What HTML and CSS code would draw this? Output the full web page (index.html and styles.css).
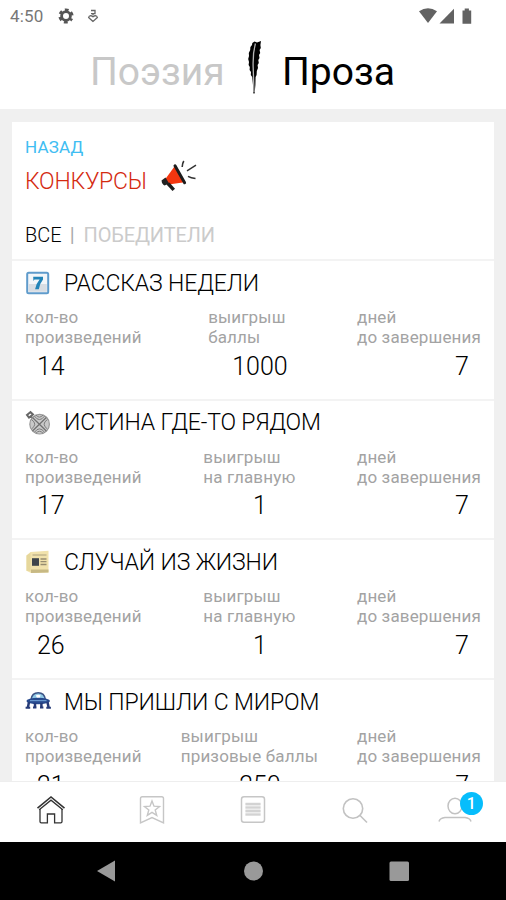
FILE: index.html
```html
<!DOCTYPE html>
<html lang="ru">
<head>
    <meta charset="UTF-8">
    <meta name="viewport" content="width=device-width, initial-scale=1.0">
    <title>Конкурсы</title>
    <link rel="stylesheet" href="styles.css">
</head>
<body>
    <div class="screen">

        <!-- Status Bar -->
        <div class="status-bar">
            <span class="clock">4:50</span>
            <svg class="gear" width="16" height="16" viewBox="0 0 16 16">
                <circle cx="8" cy="8" r="4.4" fill="none" stroke="#555" stroke-width="2.8"/>
                <circle cx="8" cy="8" r="6" fill="none" stroke="#555" stroke-width="3.2" stroke-dasharray="3.4 2.883" stroke-dashoffset="1.7" transform="rotate(30 8 8)"/>
            </svg>
            <svg class="debug" width="12" height="14" viewBox="0 0 12 14" fill="none" stroke="#666" stroke-width="1.3">
                <path d="M4 1.5h4v3.2h-4M6 4v2.5"/>
                <path d="M6 12.5L1.6 8.6Q2 6.4 4 6.6L6 7.8L8 6.6Q10 6.4 10.4 8.6Z"/>
            </svg>
            <svg class="signals" width="54" height="16" viewBox="0 0 54 16" fill="#626262">
                <path d="M0 3.2Q9 -2.6 18 3.2L9 15Z"/>
                <path d="M35 0.8V15.4H20.5Z"/>
                <path d="M43.5 2.5h2.2V0.5h4.2v2h2.3V15.7h-8.7Z"/>
            </svg>
        </div>

        <!-- Header -->
        <div class="header">
            <span class="title muted">Поэзия</span>
            <svg class="quill" width="16" height="54" viewBox="0 0 16 54">
                <path d="M7.5 0.5L10 1.5L14 0L13.4 4L13.8 7L12.6 9L13.2 12L12 14L12.5 17L11.3 19L11.8 22L10.6 24L11 27L9.8 30L9.6 34L8.6 36L8.4 44L7.6 52.5L6.4 52.5L6 44L5.2 36L3.8 34L4 31L2.6 29L2.8 26L1.6 24L2 21L1.2 18L2 15L1.8 12L3.2 9L3.4 6L5 4L5.3 2Z" fill="#000"/>
                <path d="M8.4 2.5Q5.6 13 6.2 27L7 51" fill="none" stroke="#b5b5b5" stroke-width="1.3"/>
            </svg>
            <span class="title">Проза</span>
        </div>

        <!-- Contest List -->
        <div class="content">
            <div class="card">
                <div class="card-head">
                    <div class="back">НАЗАД</div>
                    <div class="heading">
                        <span>КОНКУРСЫ</span>
                        <svg class="horn" width="36" height="34" viewBox="0 0 36 34">
                            <path d="M13.5 6.5L4 19.5L7.5 24.5L23.5 22.2Z" fill="#f4360f"/>
                            <path d="M0.5 20.5L4.5 17.6L8.2 23.4L3.5 25.4Q1 24.5 0.5 20.5Z" fill="#222"/>
                            <path d="M5.5 24.5L8.5 22.5L14 28.8L11.5 31Z" fill="#1d1d1d"/>
                            <path d="M14 5.8L23.6 22.8" stroke="#1d1d1d" stroke-width="3" stroke-linecap="round"/>
                            <path d="M21.2 7Q21.2 3.5 22.8 1" fill="none" stroke="#333" stroke-width="1.6"/>
                            <path d="M26 10.8L35 5.2M27 16.3Q30 18 34.5 18.4" fill="none" stroke="#333" stroke-width="1.5"/>
                        </svg>
                    </div>
                    <div class="filters">
                        <span>ВСЕ</span>
                        <span class="bar">|</span>
                        <span class="winners">ПОБЕДИТЕЛИ</span>
                    </div>
                </div>

                <div class="contest">
                    <div class="contest-name">
                        <svg class="icon" width="26" height="26" viewBox="0 0 26 26">
                            <rect x="2.2" y="2.7" width="21" height="20.6" rx="1.5" fill="#f3f6f9" stroke="#5f9bcb" stroke-width="2"/>
                            <path d="M3.6 14h18.2v7.8H3.6Z" fill="#d8dde3"/>
                            <path d="M8.2 6.8h9.8v2.6Q14.6 13.6 13.8 19.2h-3.7Q11 13.5 14.6 9.4H9.5L8.4 11Z" fill="#2384b8"/>
                        </svg>
                        <span>РАССКАЗ НЕДЕЛИ</span>
                    </div>
                    <div class="labels">
                        <span>кол-во<br>произведений</span>
                        <span class="points">выигрыш<br>баллы</span>
                        <span>дней<br>до завершения</span>
                    </div>
                    <div class="values"><span>14</span><span>1000</span><span>7</span></div>
                </div>

                <div class="contest">
                    <div class="contest-name">
                        <svg class="icon" width="26" height="26" viewBox="0 0 26 26" fill="none">
                            <path d="M2 5L5.5 2L8 4.5L4 7.5ZM5.5 6L9 9.5" stroke="#666" stroke-width="2"/>
                            <circle cx="14.6" cy="14.2" r="9.8" fill="#c9c9c9" stroke="#999" stroke-width="1.2"/>
                            <path d="M7.5 7.5L21.3 21M21.3 7.5L7.5 21" stroke="#707070" stroke-width="1.2"/>
                            <path d="M9.5 6.2Q14.4 13 19.5 6.2M9.5 22.2Q14.4 15.5 19.5 22.2M6.5 9.5Q13 14.2 6.5 19M22.4 9.5Q15.8 14.2 22.4 19M11 5.2Q14.4 9 18 5.2M11 23.2Q14.4 19.4 18 23.2" stroke="#7c7c7c" stroke-width="1"/>
                        </svg>
                        <span>ИСТИНА ГДЕ-ТО РЯДОМ</span>
                    </div>
                    <div class="labels">
                        <span>кол-во<br>произведений</span>
                        <span>выигрыш<br>на главную</span>
                        <span>дней<br>до завершения</span>
                    </div>
                    <div class="values"><span>17</span><span>1</span><span>7</span></div>
                </div>

                <div class="contest">
                    <div class="contest-name">
                        <svg class="icon" width="26" height="26" viewBox="0 0 26 26">
                            <path d="M5.5 3L23.5 1.8V23.6L6 24L1.5 21.8V6.5Z" fill="#f1e2ac"/>
                            <path d="M1.5 6.5L5.5 4V22L1.5 21.8Z" fill="#e6d79c"/>
                            <path d="M7.5 6H21.5" stroke="#b8ac86" stroke-width="1.2"/>
                            <rect x="7" y="9.2" width="7" height="7.6" fill="#3f454b"/>
                            <path d="M15.5 10H21.5M15.5 12.7H21.5M15.5 15.5H21.5" stroke="#968c70" stroke-width="1.3"/>
                            <path d="M6 20.4H23.5V23.6L6 24Z" fill="#c7b984"/>
                        </svg>
                        <span>СЛУЧАЙ ИЗ ЖИЗНИ</span>
                    </div>
                    <div class="labels">
                        <span>кол-во<br>произведений</span>
                        <span>выигрыш<br>на главную</span>
                        <span>дней<br>до завершения</span>
                    </div>
                    <div class="values"><span>26</span><span>1</span><span>7</span></div>
                </div>

                <div class="contest">
                    <div class="contest-name">
                        <svg class="icon" width="26" height="26" viewBox="0 0 26 26">
                            <path d="M6 10.5Q7 3.8 13.2 3.8T20.4 10.5Z" fill="#91c9e6" stroke="#3d5486" stroke-width="1.5"/>
                            <path d="M10.8 6.5Q13.2 5 15.6 6.5L14.5 9H12Z" fill="#fff"/>
                            <ellipse cx="13.2" cy="12" rx="11.8" ry="3.3" fill="#274a8e"/>
                            <path d="M4 13L2.8 19M10 14V18.5M16.4 14V18.5M22.5 13L23.7 19" stroke="#263b78" stroke-width="2.5"/>
                            <path d="M5 11.6H21.5" stroke="#6796cd" stroke-width="1.2"/>
                            <path d="M0.6 18.8h4.6M8 18.5h3.4M15 18.5h3.4M21.3 18.8h4.6" stroke="#263b78" stroke-width="2"/>
                        </svg>
                        <span>МЫ ПРИШЛИ С МИРОМ</span>
                    </div>
                    <div class="labels">
                        <span>кол-во<br>произведений</span>
                        <span>выигрыш<br>призовые баллы</span>
                        <span>дней<br>до завершения</span>
                    </div>
                    <div class="values"><span>21</span><span>250</span><span>7</span></div>
                </div>
            </div>
        </div>

        <!-- Tab Bar -->
        <div class="tab-bar">
            <div class="tab">
                <svg width="32" height="32" viewBox="0 0 32 32" fill="none" stroke="#333" stroke-width="1.3">
                    <path d="M2.5 15.2L16 4L29.5 15.2" stroke-width="1.6"/>
                    <path d="M4.2 16.8L16 7.2L27.8 16.8"/>
                    <path d="M5 16V28.5Q5 29.8 6.3 29.8H12.4V21H19.6V29.8H25.7Q27 29.8 27 28.5V16"/>
                </svg>
            </div>
            <div class="tab">
                <svg width="32" height="32" viewBox="0 0 32 32" fill="none" stroke="#c6c6c6" stroke-width="1.4">
                    <path d="M4.5 30V5.5Q4.5 3.7 6.3 3.7H25.7Q27.5 3.7 27.5 5.5V30L16 24.5Z"/>
                    <path d="M16 8L18 13.2L23.5 13.5L19.2 17L20.7 22.3L16 19.3L11.3 22.3L12.8 17L8.5 13.5L14 13.2Z"/>
                </svg>
            </div>
            <div class="tab">
                <svg width="32" height="32" viewBox="0 0 32 32" fill="none" stroke="#c6c6c6" stroke-width="1.5">
                    <rect x="4.5" y="3.7" width="23" height="25.6" rx="2.5"/>
                    <rect x="8.5" y="9.5" width="15" height="13.5" fill="#ececec" stroke="none"/>
                    <path d="M8.5 11H23.5M8.5 14.5H23.5M8.5 18H23.5M8.5 21.5H23.5" stroke-width="1.8" stroke="#d3d3d3"/>
                </svg>
            </div>
            <div class="tab">
                <svg width="32" height="32" viewBox="0 0 32 32" fill="none" stroke="#c2c2c2" stroke-width="1.6">
                    <circle cx="15" cy="15.5" r="9.7"/>
                    <path d="M21.8 22.3L29 29.5"/>
                </svg>
            </div>
            <div class="tab">
                <svg width="36" height="32" viewBox="0 0 36 32" fill="none" stroke="#c2c2c2" stroke-width="1.5">
                    <ellipse cx="18" cy="13" rx="7" ry="7.7"/>
                    <path d="M2 28.5Q3 25 8 24.5H28Q33 25 34 28.5"/>
                </svg>
                <span class="badge">1</span>
            </div>
        </div>

        <!-- System Navigation -->
        <div class="nav-bar">
            <div class="nav-item">
                <svg width="22" height="22" viewBox="0 0 22 22"><path d="M1 11L19 0.5V21.5Z" fill="#999"/></svg>
            </div>
            <div class="nav-item">
                <svg width="22" height="22" viewBox="0 0 22 22"><circle cx="11.5" cy="11" r="9.5" fill="#999"/></svg>
            </div>
            <div class="nav-item">
                <svg width="22" height="22" viewBox="0 0 22 22"><rect x="1.5" y="1.5" width="19.5" height="19.5" rx="1.5" fill="#999"/></svg>
            </div>
        </div>

    </div>
</body>
</html>
```
FILE: styles.css
```css
/* General Styles */
body {
    font-family: Roboto, "Liberation Sans", sans-serif;
    font-weight: 300;
    margin: 0;
    background-color: #fff;
    color: #000;
}

svg {
    display: block;
    flex: none;
}

.screen {
    display: flex;
    flex-direction: column;
    width: 506px;
    height: 900px;
    overflow: hidden;
}

/* Status Bar */
.status-bar {
    display: flex;
    align-items: center;
    height: 31px;
    padding: 0 33px 0 10px;
    flex: none;
}

.clock {
    font-size: 17px;
    font-weight: 400;
    letter-spacing: 0.2px;
    color: #777;
    width: 48px;
}

.debug {
    margin-left: 13px;
}

.signals {
    margin-left: auto;
}

/* Header */
.header {
    display: flex;
    height: 78px;
    padding-left: 90px;
    flex: none;
}

.title {
    font-size: 39px;
    font-weight: 400;
    line-height: 83px;
    width: 157px;
    color: #000;
}

.muted {
    color: #c8c8c8;
}

.quill {
    margin: 10px 19px 0 0;
}

/* Contest List */
.content {
    flex: 1;
    min-height: 0;
    overflow: hidden;
    background-color: #f0f0f0;
    border-bottom: 1px solid #eee;
    padding: 13px 12px 0;
}

.card {
    background-color: #fff;
}

.card-head {
    height: 137px;
    padding-left: 13px;
    overflow: hidden;
}

.back {
    margin-top: 14px;
    font-size: 17px;
    font-weight: 400;
    line-height: 22px;
    letter-spacing: 0.2px;
    color: #40bdf2;
}

.heading {
    display: flex;
    align-items: center;
    gap: 14px;
    height: 36px;
    margin-top: 5px;
    font-size: 23px;
    letter-spacing: -0.25px;
    color: #d42a10;
}

.horn {
    margin-top: -8px;
}

.filters {
    display: flex;
    margin-top: 24px;
    font-size: 20px;
    line-height: 24px;
}

.bar {
    margin: 0 9px 0 8px;
    font-weight: 400;
    color: #aaa;
}

.winners {
    font-weight: 400;
    letter-spacing: -0.15px;
    color: #cbcbcb;
}

.contest {
    box-sizing: border-box;
    height: 139.7px;
    border-top: 2px solid #f3f3f3;
    padding: 9px 13px 0;
}

.contest-name {
    display: flex;
    align-items: center;
    gap: 13px;
    height: 26px;
    font-size: 23px;
    letter-spacing: -0.13px;
    white-space: nowrap;
}

.labels {
    display: flex;
    justify-content: space-between;
    margin-top: 11px;
    font-size: 17px;
    font-weight: 400;
    line-height: 20px;
    letter-spacing: 0.15px;
    color: #a3a3a3;
}

.points {
    padding-right: 5px;
}

.values {
    display: flex;
    justify-content: space-between;
    padding: 0 12px;
    margin-top: 4.5px;
    font-size: 25px;
    line-height: 30px;
}

/* Tab Bar */
.tab-bar {
    display: grid;
    grid-template-columns: repeat(5, 1fr);
    height: 60px;
    flex: none;
}

.tab {
    position: relative;
    display: flex;
    justify-content: center;
    padding-top: 11px;
}

.badge {
    position: absolute;
    top: 10px;
    left: 55px;
    width: 23px;
    height: 23px;
    border-radius: 50%;
    background-color: #06bdfc;
    color: #fff;
    font-size: 16px;
    font-weight: 500;
    line-height: 23px;
    text-align: center;
}

/* System Navigation */
.nav-bar {
    display: flex;
    justify-content: space-between;
    align-items: center;
    height: 58px;
    padding: 0 96px;
    background-color: #000;
    flex: none;
}
```
